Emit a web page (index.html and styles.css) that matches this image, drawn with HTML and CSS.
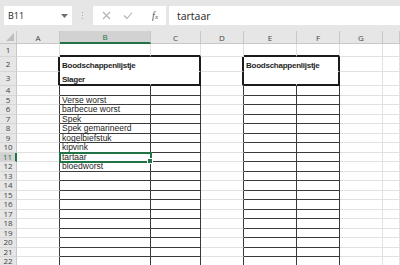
FILE: index.html
```html
<!DOCTYPE html>
<html lang="nl">
<head>
    <meta charset="UTF-8">
    <meta name="viewport" content="width=device-width, initial-scale=1.0">
    <title>Boodschappenlijstje</title>
    <link rel="stylesheet" href="styles.css">
</head>
<body>
    <!-- Formulebalk -->
    <div class="formula-bar">
        <div class="name-box">
            <span>B11</span>
            <svg class="caret" width="7" height="4" viewBox="0 0 7 4"><path d="M0 0h7L3.5 4z" fill="#707070"/></svg>
        </div>
        <div class="grip"><i></i><i></i><i></i></div>
        <div class="fx-buttons">
            <span class="fx-btn">
                <svg width="9" height="9" viewBox="0 0 9 9"><path d="M1 1l7 7M8 1l-7 7" stroke="#b0b0b0" stroke-width="1.1" fill="none"/></svg>
            </span>
            <span class="fx-btn">
                <svg width="10" height="9" viewBox="0 0 10 9"><path d="M1 4.5l3 3L9 1.5" stroke="#b0b0b0" stroke-width="1.1" fill="none"/></svg>
            </span>
            <span class="fx"><i>f</i><small>x</small></span>
        </div>
        <div class="formula-input">tartaar</div>
    </div>

    <!-- Werkblad -->
    <div class="sheet">
        <div class="row head">
            <div class="corner"></div>
            <div class="col">A</div>
            <div class="col active">B</div>
            <div class="col">C</div>
            <div class="col">D</div>
            <div class="col">E</div>
            <div class="col">F</div>
            <div class="col">G</div>
            <div class="col"></div>
        </div>
        <div id="rows"></div>
    </div>

    <script>
        // Inhoud van de cellen: rij -> kolom (0 = A)
        const data = {
            2: { 1: 'Boodschappenlijstje', 4: 'Boodschappenlijstje' },
            3: { 1: 'Slager' },
            5: { 1: 'Verse worst' },
            6: { 1: 'barbecue worst' },
            7: { 1: 'Spek' },
            8: { 1: 'Spek gemarineerd' },
            9: { 1: 'kogelbiefstuk' },
            10: { 1: 'kipvink' },
            11: { 1: 'tartaar' },
            12: { 1: 'bloedworst' }
        };

        // Randen van de twee lijsten (B:C en E:F)
        function cellClass(r, c) {
            const edge = c === 0 || c === 3;
            const open = c === 1 || c === 4;
            const boxed = open || c === 2 || c === 5;

            if (r === 1) return boxed ? 'cell box-top' : 'cell';
            if (r <= 3) {
                if (edge) return 'cell thick-r';
                if (!boxed) return 'cell';
                let cls = open ? 'cell no-r' : 'cell thick-r';
                cls += r === 2 ? ' no-b' : ' thick-b';
                return cls;
            }
            if (edge) return 'cell edge';
            return boxed ? 'cell boxed' : 'cell';
        }

        const rows = document.getElementById('rows');
        for (let r = 1; r <= 22; r++) {
            const row = document.createElement('div');
            row.className = 'row' + (r === 1 ? ' first' : '') + (r === 2 || r === 3 ? ' tall bold' : '');

            let html = `<div class="rh${r === 11 ? ' active' : ''}">${r}</div>`;
            for (let c = 0; c < 8; c++) {
                let cls = cellClass(r, c);
                if (r === 11 && c === 1) cls += ' sel';
                const text = (data[r] && data[r][c]) || '';
                html += `<div class="${cls}"><span>${text}</span></div>`;
            }
            row.innerHTML = html;
            rows.appendChild(row);
        }
    </script>
</body>
</html>
```

FILE: styles.css
```css
/* Algemeen */
body {
    margin: 0;
    background-color: #fff;
    font-family: "Liberation Sans", Arial, sans-serif;
    height: 265px;
    overflow: hidden;
}

/* Formulebalk */
.formula-bar {
    height: 31px;
    display: flex;
    align-items: center;
    padding-left: 4px;
    background-color: #e6e6e6;
    font-family: "Open Sans", "Noto Sans", sans-serif;
    color: #262626;
}

.name-box {
    width: 68px;
    height: 19px;
    box-sizing: border-box;
    background-color: #fff;
    display: flex;
    align-items: center;
    justify-content: space-between;
    padding: 0 4px 0 4px;
    font-size: 9px;
}

.grip {
    width: 21px;
    display: flex;
    flex-direction: column;
    align-items: center;
    gap: 2px;
}

.grip i {
    width: 1px;
    height: 1px;
    background-color: #a8a8a8;
}

.fx-buttons {
    width: 73px;
    height: 19px;
    background-color: #fff;
    display: flex;
    align-items: center;
    padding-left: 2px;
    box-sizing: border-box;
    margin-right: 3px;
}

.fx-btn {
    width: 22px;
    display: flex;
    justify-content: center;
}

.fx {
    margin-left: auto;
    margin-right: 8px;
    font-family: "Liberation Serif", serif;
    color: #505050;
    font-size: 10px;
}

.fx small {
    font-size: 7px;
    font-style: italic;
}

.formula-input {
    flex: 1;
    height: 19px;
    background-color: #fff;
    display: flex;
    align-items: center;
    padding-left: 8px;
    font-size: 10.5px;
}

/* Werkblad */
.sheet {
    background-color: #fff;
}

.row {
    display: grid;
    grid-template-columns: 17px 43px 91px 50px 43px 53px 43px 43px 1fr;
    height: 9.5px;
}

.row.head {
    height: 13px;
}

.row.first {
    height: 13px;
}

.row.tall {
    height: 14.5px;
}

.row > div {
    box-sizing: border-box;
    min-width: 0;
}

/* Kolom- en rijkoppen */
.corner,
.col,
.rh {
    background-color: #e6e6e6;
    color: #444;
    font-family: "Open Sans", "Noto Sans", sans-serif;
    font-size: 8px;
    display: flex;
    align-items: center;
    justify-content: center;
    border-right: 1px solid #c8c8c8;
    border-bottom: 1px solid #c8c8c8;
}

.corner {
    position: relative;
}

.corner::after {
    content: "";
    position: absolute;
    right: 2px;
    bottom: 2px;
    border-left: 8px solid transparent;
    border-bottom: 8px solid #bdbdbd;
}

.col.active {
    background-color: #d2d2d2;
    color: #217346;
    border-bottom: 2px solid #217346;
}

.rh {
    font-size: 8px;
    line-height: 8px;
    border-bottom-color: #d6d6d6;
}

.rh.active {
    background-color: #d2d2d2;
    color: #217346;
    border-right: 2px solid #217346;
}

/* Cellen */
.cell {
    border-right: 1px solid #e1e1e1;
    border-bottom: 1px solid #e1e1e1;
    display: flex;
    align-items: flex-end;
    padding-left: 2px;
    font-size: 8.5px;
    line-height: 8.5px;
    color: #1e1e1e;
    white-space: nowrap;
}

.bold .cell {
    font-weight: bold;
    font-size: 8px;
    letter-spacing: -0.25px;
}

.box-top {
    border-bottom: 2px solid #1b1b1b;
}

.thick-r {
    border-right: 2px solid #1b1b1b;
}

.thick-b {
    border-bottom: 2px solid #1b1b1b;
}

.no-r {
    border-right-color: transparent;
}

.no-b {
    border-bottom-color: transparent;
}

.edge {
    border-right-color: #3a3a3a;
}

.boxed {
    border-right-color: #3a3a3a;
    border-bottom-color: #3a3a3a;
}

/* Actieve cel */
.sel {
    position: relative;
    outline: 2px solid #217346;
    outline-offset: -1px;
}

.sel::after {
    content: "";
    position: absolute;
    right: -3px;
    bottom: -3px;
    width: 4px;
    height: 4px;
    background-color: #217346;
    border: 1px solid #fff;
}
```
